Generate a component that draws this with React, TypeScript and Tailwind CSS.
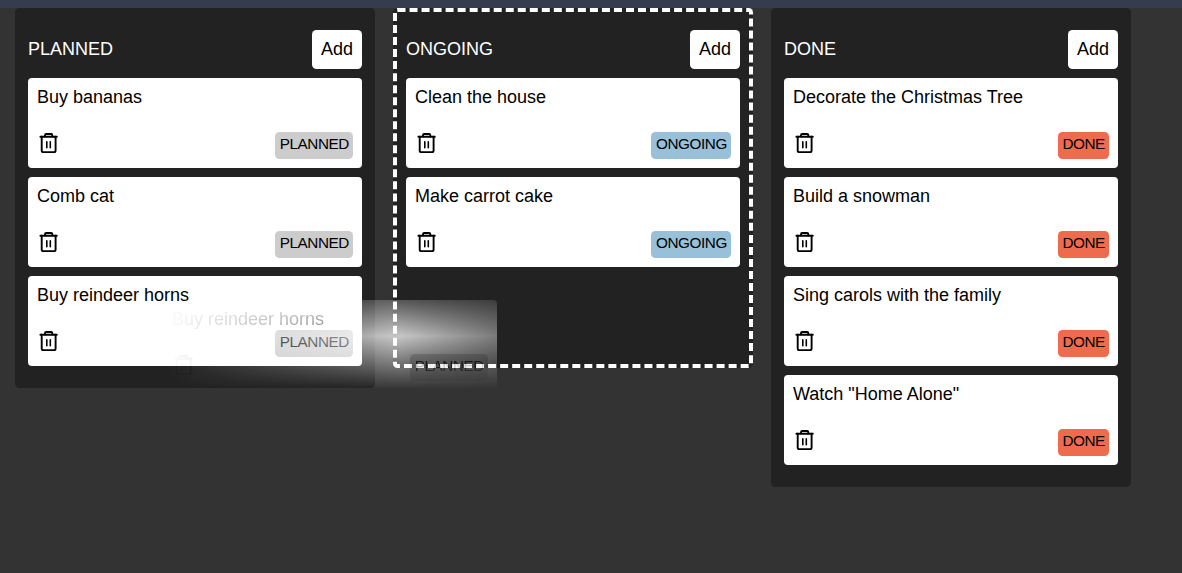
import React from "react";

type Status = "PLANNED" | "ONGOING" | "DONE";

const badgeColors: Record<Status, string> = {
  PLANNED: "bg-[#cccccc]",
  ONGOING: "bg-[#98c0d9]",
  DONE: "bg-[#ef6b4d]",
};

const columns: { status: Status; active: boolean; tasks: string[] }[] = [
  { status: "PLANNED", active: false, tasks: ["Buy bananas", "Comb cat", "Buy reindeer horns"] },
  { status: "ONGOING", active: true, tasks: ["Clean the house", "Make carrot cake"] },
  {
    status: "DONE",
    active: false,
    tasks: ["Decorate the Christmas Tree", "Build a snowman", "Sing carols with the family", 'Watch "Home Alone"'],
  },
];

function TrashIcon() {
  return (
    <svg
      width="23"
      height="23"
      viewBox="0 0 23 23"
      fill="none"
      stroke="currentColor"
      strokeWidth="1.9"
      strokeLinecap="round"
      strokeLinejoin="round"
    >
      <path d="M3.4 4.7h16.4" />
      <path d="M18.6 4.7v13.8a1.6 1.6 0 0 1-1.6 1.6H6.3a1.6 1.6 0 0 1-1.6-1.6V4.7" />
      <path d="M8 4.4V3.2a1.2 1.2 0 0 1 1.2-1.2h4.9a1.2 1.2 0 0 1 1.2 1.2v1.2" />
      <path strokeWidth="1.6" d="M9.8 9.8v6M13.3 9.8v6" />
    </svg>
  );
}

function Card({ title, status }: { title: string; status: Status }) {
  return (
    <div className="flex h-[90px] w-[334px] shrink-0 flex-col justify-between rounded-[4px] bg-white p-[9px] text-black">
      <div className="leading-5">{title}</div>
      <div className="flex h-[27px] items-start justify-between">
        <TrashIcon />
        <span
          className={`h-[27px] rounded-[4.5px] pr-[4.1px] pl-[4.5px] text-[15.3px] leading-[24px] tracking-[-0.43px] ${badgeColors[status]}`}
        >
          {status}
        </span>
      </div>
    </div>
  );
}

export default function App() {
  return (
    <div className="relative h-[573px] w-full overflow-hidden bg-[#333333] font-['Liberation_Sans',Arial,sans-serif] text-[18px]">
      <div className="h-2 bg-[#343c4e]" />
      <main className="flex items-start gap-[18px] pl-[15px]">
        {columns.map((column) => (
          <section
            key={column.status}
            className={`flex min-h-[360px] w-[360px] shrink-0 flex-col gap-[9px] rounded-[4.5px] border-4 bg-[#222222] px-[9px] pt-[18px] pb-[18px] ${
              column.active ? "border-dashed border-white" : "border-solid border-[#222222]"
            }`}
          >
            <header className="flex h-[39px] items-center justify-between">
              <h2 className="pb-[2px] leading-5 text-white">{column.status}</h2>
              <button className="h-[39px] w-[50px] rounded-[4.5px] bg-white text-center leading-[37px] text-black">Add</button>
            </header>
            {column.tasks.map((task) => (
              <Card key={task} title={task} status={column.status} />
            ))}
          </section>
        ))}
      </main>
      <div className="pointer-events-none absolute top-[300px] left-[163px] [mask-composite:intersect] [mask-image:linear-gradient(to_right,transparent_0%,rgba(0,0,0,.85)_71%,rgba(0,0,0,.46)_100%),linear-gradient(to_bottom,rgba(0,0,0,.27)_0%,rgba(0,0,0,.88)_40%,transparent_99%)]">
        <Card title="Buy reindeer horns" status="PLANNED" />
      </div>
    </div>
  );
}
